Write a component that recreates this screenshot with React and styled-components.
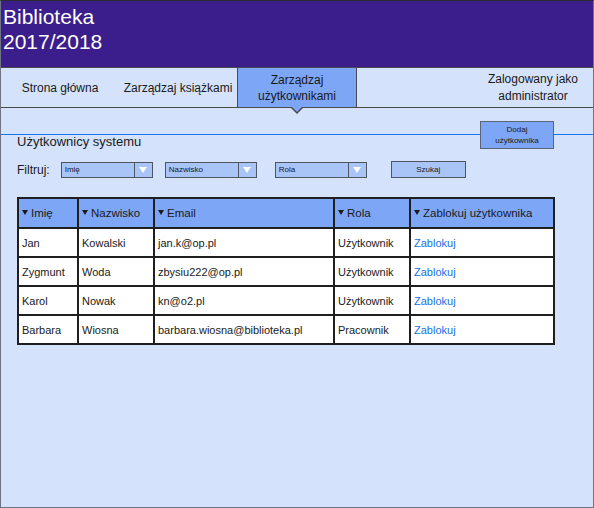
import React from "react";
import styled, { createGlobalStyle } from "styled-components";

const GlobalStyle = createGlobalStyle`
  html, body {
    margin: 0;
    padding: 0;
    background: #ffffff;
  }
  body {
    font-family: "Liberation Sans", Arial, sans-serif;
  }
`;

const Frame = styled.div`
  box-sizing: border-box;
  width: 594px;
  height: 508px;
  display: flex;
  flex-direction: column;
  background: #d4e3fb;
  border: 1px solid #6e7486;
  border-top-color: #2a2a2a;
  overflow: hidden;
`;

const Header = styled.header`
  height: 66px;
  flex: none;
  background: #3b1e8b;
  color: #ffffff;
  font-size: 21px;
  line-height: 25px;
  padding: 3px 0 0 2px;
  box-sizing: border-box;
`;

const Nav = styled.nav`
  height: 41px;
  flex: none;
  box-sizing: border-box;
  display: flex;
  background: #d4e3fb;
  border-top: 1px solid #4a4a4a;
  border-bottom: 1px solid #4a4a4a;
  font-size: 12px;
  line-height: 16px;
  color: #1a1a1a;
`;

const NavItem = styled.div`
  position: relative;
  width: ${({ $w }) => $w}px;
  flex: none;
  display: flex;
  align-items: center;
  justify-content: center;
  text-align: center;
  box-sizing: border-box;
  background: ${({ $active }) => ($active ? "#7ea6f7" : "transparent")};
  border-left: ${({ $active }) => ($active ? "1px solid #4a4a4a" : "none")};
  border-right: ${({ $active }) => ($active ? "1px solid #4a4a4a" : "none")};

  ${({ $active }) =>
    $active &&
    `
    &::before {
      content: "";
      position: absolute;
      left: 50%;
      bottom: -7px;
      margin-left: -6px;
      border-left: 6px solid transparent;
      border-right: 6px solid transparent;
      border-top: 6px solid #4a4a4a;
      z-index: 2;
    }
    &::after {
      content: "";
      position: absolute;
      left: 50%;
      bottom: -5px;
      margin-left: -5px;
      border-left: 5px solid transparent;
      border-right: 5px solid transparent;
      border-top: 5px solid #7ea6f7;
      z-index: 3;
    }
  `}
`;

const UserInfo = styled.div`
  flex: 1;
  display: flex;
  align-items: center;
  justify-content: flex-end;
  text-align: center;
  padding-right: 15px;
  line-height: 17px;
  padding-top: 1px;
`;

const Content = styled.main`
  position: relative;
  flex: 1;
  padding: 0 39px 0 16px;

  &::before {
    content: "";
    position: absolute;
    top: 26px;
    left: 0;
    right: 0;
    height: 1px;
    background: #1a73e8;
  }
`;

const TopRow = styled.div`
  display: flex;
  justify-content: space-between;
  align-items: flex-end;
  margin-top: 13px;
`;

const Title = styled.h2`
  margin: 0;
  font-size: 13px;
  line-height: 15px;
  font-weight: normal;
  color: #1a1a1a;
`;

const AddButton = styled.button`
  position: relative;
  z-index: 1;
  width: 74px;
  height: 28px;
  padding: 0;
  background: #7ea6f7;
  border: 1px solid #5b6478;
  font-family: "Liberation Sans", Arial, sans-serif;
  font-size: 8px;
  line-height: 11px;
  color: #1a1a1a;
`;

const FilterRow = styled.div`
  display: flex;
  align-items: center;
  margin-top: 12px;
  height: 17px;
`;

const FilterLabel = styled.span`
  font-size: 12px;
  color: #1a1a1a;
  margin-right: 11px;
`;

const Select = styled.div`
  box-sizing: border-box;
  width: 92px;
  height: 16px;
  margin-right: ${({ $gap }) => $gap}px;
  display: flex;
  background: #a9c4f7;
  border: 1px solid #4f5563;
  font-size: 8px;
  color: #1a1a1a;
`;

const SelectValue = styled.span`
  flex: 1;
  padding-left: 3px;
  line-height: 14px;
`;

const SelectArrow = styled.span`
  width: 17px;
  flex: none;
  border-left: 1px solid #4f5563;
  display: flex;
  align-items: center;
  justify-content: center;

  &::after {
    content: "";
    border-left: 4px solid transparent;
    border-right: 4px solid transparent;
    border-top: 6px solid #ffffff;
  }
`;

const SearchButton = styled.button`
  box-sizing: border-box;
  width: 75px;
  height: 17px;
  padding: 0;
  background: #a9c4f7;
  border: 1px solid #4f5563;
  font-family: "Liberation Sans", Arial, sans-serif;
  font-size: 8px;
  color: #1a1a1a;
`;

const Table = styled.table`
  margin-top: 19px;
  width: 536px;
  border-collapse: collapse;
  table-layout: fixed;
  font-size: 11px;
  color: #1a1a1a;
`;

const HeadCell = styled.th`
  height: 28px;
  padding: 0 0 0 3px;
  text-align: left;
  font-weight: normal;
  font-size: 11.5px;
  background: #7ea6f7;
  border: 2px solid #1f1f1f;

  &::before {
    content: "";
    display: inline-block;
    vertical-align: middle;
    margin-right: 3px;
    margin-top: -2px;
    border-left: 3px solid transparent;
    border-right: 3px solid transparent;
    border-top: 5px solid #1a1a1a;
  }
`;

const Cell = styled.td`
  height: 27px;
  padding: 0 0 0 3px;
  background: #ffffff;
  border: 2px solid #1f1f1f;
  white-space: nowrap;
  overflow: hidden;
`;

const BlockLink = styled.a`
  color: #1570e6;
  text-decoration: none;
  cursor: pointer;
`;

const columns = [
  { label: "Imię", width: 60 },
  { label: "Nazwisko", width: 76 },
  { label: "Email", width: 180 },
  { label: "Rola", width: 76 },
  { label: "Zablokuj użytkownika", width: 144 },
];

const users = [
  { name: "Jan", surname: "Kowalski", email: "jan.k@op.pl", role: "Użytkownik" },
  { name: "Zygmunt", surname: "Woda", email: "zbysiu222@op.pl", role: "Użytkownik" },
  { name: "Karol", surname: "Nowak", email: "kn@o2.pl", role: "Użytkownik" },
  { name: "Barbara", surname: "Wiosna", email: "barbara.wiosna@biblioteka.pl", role: "Pracownik" },
];

const filters = [
  { label: "Imię", gap: 12 },
  { label: "Nazwisko", gap: 18 },
  { label: "Rola", gap: 24 },
];

export default function App() {
  return (
    <>
      <GlobalStyle />
      <Frame>
        <Header>
          Biblioteka
          <br />
          2017/2018
        </Header>
        <Nav>
          <NavItem $w={118}>Strona główna</NavItem>
          <NavItem $w={118}>Zarządzaj książkami</NavItem>
          <NavItem $w={120} $active>
            Zarządzaj
            <br />
            użytkownikami
          </NavItem>
          <UserInfo>
            Zalogowany jako
            <br />
            administrator
          </UserInfo>
        </Nav>
        <Content>
          <TopRow>
            <Title>Użytkownicy systemu</Title>
            <AddButton>
              Dodaj
              <br />
              użytkownika
            </AddButton>
          </TopRow>
          <FilterRow>
            <FilterLabel>Filtruj:</FilterLabel>
            {filters.map((f) => (
              <Select key={f.label} $gap={f.gap}>
                <SelectValue>{f.label}</SelectValue>
                <SelectArrow />
              </Select>
            ))}
            <SearchButton>Szukaj</SearchButton>
          </FilterRow>
          <Table>
            <colgroup>
              {columns.map((c) => (
                <col key={c.label} style={{ width: c.width }} />
              ))}
            </colgroup>
            <thead>
              <tr>
                {columns.map((c) => (
                  <HeadCell key={c.label}>{c.label}</HeadCell>
                ))}
              </tr>
            </thead>
            <tbody>
              {users.map((u) => (
                <tr key={u.email}>
                  <Cell>{u.name}</Cell>
                  <Cell>{u.surname}</Cell>
                  <Cell>{u.email}</Cell>
                  <Cell>{u.role}</Cell>
                  <Cell>
                    <BlockLink>Zablokuj</BlockLink>
                  </Cell>
                </tr>
              ))}
            </tbody>
          </Table>
        </Content>
      </Frame>
    </>
  );
}
